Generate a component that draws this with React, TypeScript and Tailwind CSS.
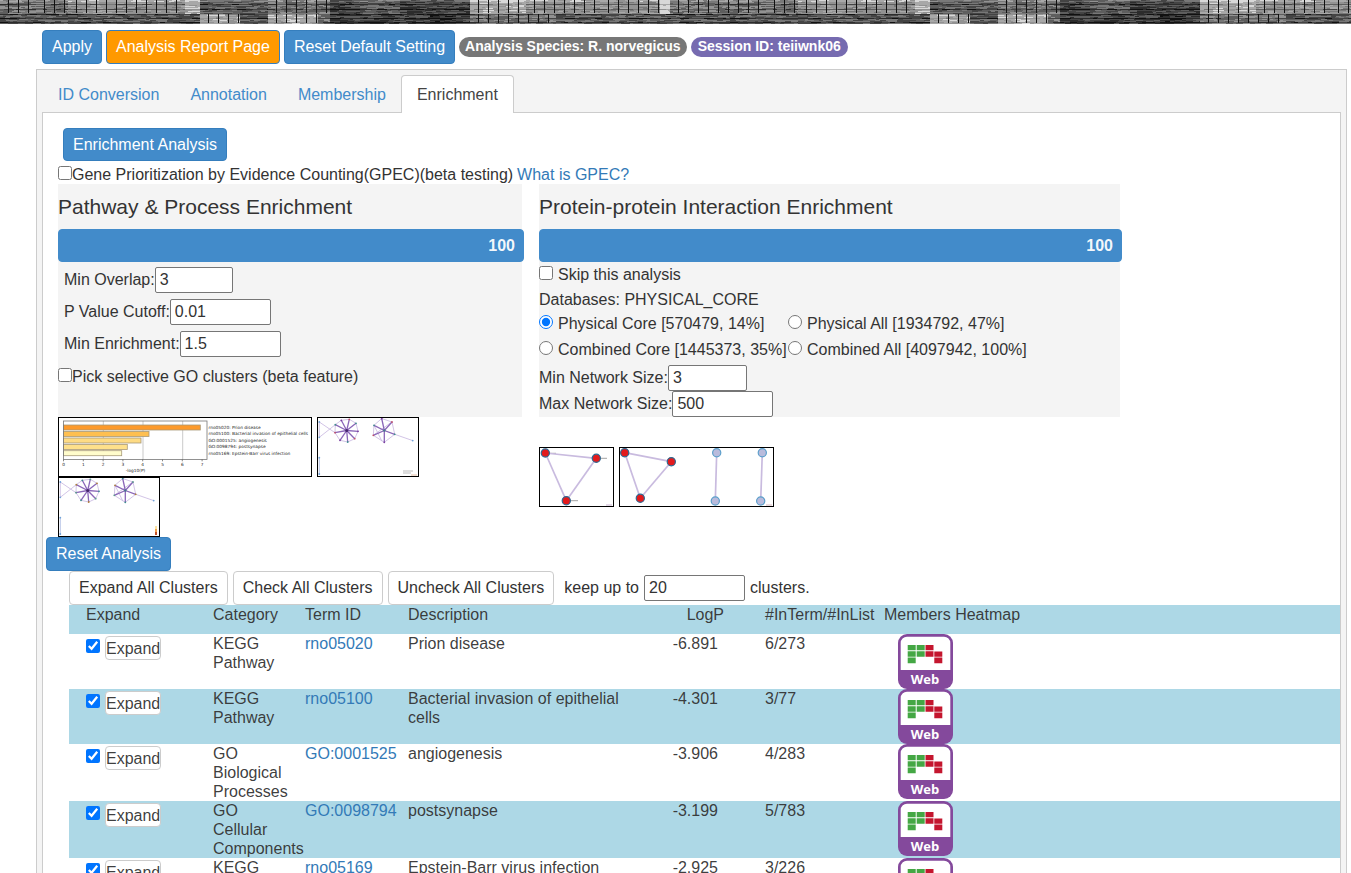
import type { ReactNode } from "react";

/* ---------- Woven texture of the page header ---------- */

const TILE = 730;
const SHADES = ["#101010", "#2c2c2c", "#444444", "#5e5e5e", "#787878", "#929292", "#a8a8a8", "#d8d8d8"];

// [start, end, brightness 0-7, has a grid]
const UPPER: [number, number, number, boolean][] = [
  [0, 36, 4, true], [36, 68, 4, true], [68, 185, 5, true], [185, 200, 6, false], [200, 268, 3, false],
  [268, 330, 4, true], [330, 360, 2, false], [360, 400, 3, false], [400, 470, 2, false], [470, 526, 6, true],
  [526, 600, 5, true], [600, 660, 5, true], [660, 670, 7, false], [670, 730, 4, true],
];
const LOWER: [number, number, number, boolean][] = [
  [0, 68, 3, false], [68, 200, 3, false], [200, 240, 6, true], [240, 268, 3, false], [268, 318, 6, true],
  [318, 330, 4, false], [330, 430, 2, false], [430, 456, 1, false], [456, 470, 2, false], [470, 556, 4, true],
  [556, 650, 3, false], [650, 730, 3, false],
];

function buildTexture() {
  let seed = 7;
  const random = () => {
    seed = (seed * 16807) % 2147483647;
    return seed / 2147483647;
  };
  const paths = SHADES.map(() => "");
  for (let y = 0; y < 24; y++) {
    const bands = y < 14 ? UPPER : LOWER;
    const darkRow = y === 4 || y === 9 || y === 14 || y === 18 || y === 22;
    for (const [start, end, level] of bands) {
      let x = start;
      while (x < end) {
        const w = Math.min(end - x, 3 + Math.floor(random() * 8));
        const noise = Math.round((random() - 0.5) * (level < 5 ? 3 : 1.6));
        const drop = darkRow ? (level < 6 ? 2 : 1) : 0;
        const lift = y < 2 ? 1 : 0;
        const shade = Math.max(0, Math.min(7, level + noise + lift - drop));
        paths[shade] += `M${x} ${y}h${w}v1h-${w}z`;
        x += w;
      }
    }
  }
  for (const [bands, y, h] of [[UPPER, 0, 13], [LOWER, 14, 9]] as const) {
    for (const [start, end, , grid] of bands) {
      if (!grid) continue;
      for (let x = start + 8; x < end; x += 10) paths[0] += `M${x} ${y}h1v${h}h-1z`;
    }
  }
  return paths;
}

const TEXTURE = buildTexture();

function HeaderTexture() {
  return (
    <svg className="block h-6 w-full" aria-hidden="true">
      <defs>
        <pattern id="weave" width={TILE} height="24" patternUnits="userSpaceOnUse">
          {TEXTURE.map((_, i) => {
            const layer = TEXTURE.length - 1 - i;
            return <path key={layer} d={TEXTURE[layer]} fill={SHADES[layer]} />;
          })}
        </pattern>
      </defs>
      <rect width="100%" height="24" fill="url(#weave)" />
    </svg>
  );
}

/* ---------- Controls ---------- */

function PrimaryButton({ children, className = "bg-[#428bca]" }: { children: ReactNode; className?: string }) {
  return (
    <button type="button" className={`h-[34px] rounded border border-[#357ebd] px-[9px] leading-5 text-white ${className}`}>
      {children}
    </button>
  );
}

function PlainButton({ children }: { children: ReactNode }) {
  return (
    <button type="button" className="h-[34px] rounded border border-[#ccc] bg-white px-[9px] leading-5">
      {children}
    </button>
  );
}

function NumberField({ id, label, value, width = "w-[101px]" }: { id: string; label: string; value: string; width?: string }) {
  return (
    <>
      <label htmlFor={id}>{label}</label>
      <input
        id={id}
        type="text"
        defaultValue={value}
        className={`h-[26px] rounded-[2px] border border-[#767676] bg-white px-1 ${width}`}
      />
    </>
  );
}

function ProgressBar({ label }: { label: string }) {
  return (
    <div
      role="progressbar"
      aria-label={label}
      aria-valuenow={100}
      className="-mr-0.5 flex h-[33px] items-center justify-end rounded border border-[#428bca] bg-[#428bca] px-2 font-bold text-white/95"
    >
      100
    </div>
  );
}

/* ---------- Thumbnails ---------- */

const BARS = [
  { end: 142.3, y: 8, fill: "#fd9a2b", label: "rno05020: Prion disease" },
  { end: 91, y: 14.5, fill: "#febf50", label: "rno05100: Bacterial invasion of epithelial cells" },
  { end: 83, y: 21, fill: "#fedb84", label: "GO:0001525: angiogenesis" },
  { end: 69.3, y: 27.5, fill: "#fee08b", label: "GO:0098794: postsynapse" },
  { end: 63.7, y: 33.7, fill: "#fffccb", label: "rno05169: Epstein-Barr virus infection" },
];

function Thumb({ w, title, children }: { w: number; title: string; children: ReactNode }) {
  return (
    <a href="#preview" aria-label={title} className="block">
      <svg width={w} height="60" viewBox={`0 0 ${w} 60`} className="block">
        <rect x="0.5" y="0.5" width={w - 1} height="59" fill="#fff" />
        {children}
        <rect x="0.5" y="0.5" width={w - 1} height="59" fill="none" stroke="#000" />
      </svg>
    </a>
  );
}

function BarChartThumb() {
  return (
    <Thumb w={254} title="Enriched terms bar chart">
      <g stroke="#bbb" strokeWidth="0.8">
        <path d="M45.3 4v38.5M85 4v38.5M124.7 4v38.5" />
      </g>
      {BARS.map((b) => (
        <g key={b.label}>
          <rect x="5.5" y={b.y} width={b.end - 5.5} height="5" fill={b.fill} stroke="#a99a78" strokeWidth="0.8" />
          <text x="150.5" y={b.y + 3.9} fontSize="4.3" fontFamily="DejaVu Sans, sans-serif" fill="#222">
            {b.label}
          </text>
        </g>
      ))}
      <rect x="5.5" y="4" width="143.5" height="38.5" fill="none" stroke="#777" strokeWidth="0.8" />
      {[0, 1, 2, 3, 4, 5, 6, 7].map((n) => (
        <g key={n}>
          <path d={`M${5.5 + n * 19.8} 42.5v1.8`} stroke="#555" strokeWidth="0.7" />
          <text x={5.5 + n * 19.8} y="49" fontSize="4.3" textAnchor="middle" fontFamily="DejaVu Sans, sans-serif" fill="#222">
            {n}
          </text>
        </g>
      ))}
      <text x="77.5" y="55" fontSize="4.3" textAnchor="middle" fontFamily="DejaVu Sans, sans-serif" fill="#222">
        -log10(P)
      </text>
    </Thumb>
  );
}

const STAR_A: [number, number][] = [[24.3, 3.3], [32.3, 2.3], [39, 6.3], [41, 14.3], [37.7, 21.7], [30.7, 25], [23, 23.3], [18, 15.7], [18.3, 7.7]];
const STAR_B: [number, number][] = [[64.7, 1.5], [75, 5], [77.7, 17.3], [67.3, 25.3], [56.3, 18.3], [57, 8.3]];

function ClusterNetwork({ dots }: { dots: string[] }) {
  const ring = (pts: [number, number][]) => pts.map((p) => p.join(",")).join(" ");
  return (
    <g>
      <g fill="none" stroke="#cdbde3" strokeWidth="0.9">
        <polygon points={ring(STAR_A)} />
        <polygon points={ring(STAR_B)} />
        <path d="M2.3 5L18 15.7M2.3 20.3L18.3 7.7M2.3 5v15.3M77.7 17.3l18 6.3M57 8.3l8 16M56.3 18.3l18-13" />
      </g>
      <path d="M2.3 40.7V58" stroke="#b9c6e8" strokeWidth="1" />
      <g stroke="#8a66b8" strokeWidth="1.3">
        {STAR_A.map(([x, y]) => (
          <line key={`${x}-${y}`} x1="29.7" y1="13.5" x2={x} y2={y} />
        ))}
        {STAR_B.map(([x, y]) => (
          <line key={`${x}-${y}`} x1="67.3" y1="13.5" x2={x} y2={y} />
        ))}
      </g>
      {[...STAR_A, ...STAR_B].map(([x, y], i) => (
        <circle key={i} cx={x} cy={y} r="0.9" fill={dots[i % dots.length]} />
      ))}
      <circle cx="29.7" cy="13.5" r="1.5" fill="#46276c" />
      <circle cx="67.3" cy="13.5" r="1.2" fill="#46788c" />
      {[[95.7, 23.6], [2.3, 5], [2.3, 20.3], [2.3, 40.7], [2.3, 57]].map(([x, y]) => (
        <circle key={`${x}-${y}`} cx={x} cy={y} r="0.9" fill="#6fa3d8" />
      ))}
    </g>
  );
}

function ProteinNetwork({ nodes, edges }: { nodes: [number, number, boolean][]; edges: [number, number][] }) {
  return (
    <g>
      {edges.map(([a, b]) => (
        <line key={`${a}-${b}`} x1={nodes[a][0]} y1={nodes[a][1]} x2={nodes[b][0]} y2={nodes[b][1]} stroke="#c9bbdf" strokeWidth="1.7" />
      ))}
      {nodes.map(([x, y, hit]) => (
        <circle key={`${x}-${y}`} cx={x} cy={y} r="4.1" fill={hit ? "#e31a1c" : "#b9bbdc"} stroke={hit ? "#2c6a93" : "#5b9fcb"} strokeWidth="1.2" />
      ))}
    </g>
  );
}

function HeatmapIcon() {
  return (
    <svg width="55" height="55" viewBox="0 0 55 55" className="block" role="img" aria-label="Web heatmap">
      <rect width="55" height="55" rx="9" fill="#84499c" />
      <path d="M2.7 36V9a6.3 6.3 0 0 1 6.3-6.3h37a6.3 6.3 0 0 1 6.3 6.3v27z" fill="#fff" />
      <path d="M9.7 11h8v5.3h-8zM18.7 11h8v5.3h-8zM9.7 17.2h8v5.5h-8zM18.7 17.2h8v5.5h-8zM9.7 23.6h8v5.6h-8z" fill="#44a744" />
      <path d="M27.5 11h8v5.3h-8zM27.5 17.2h8v5.5h-8zM36.3 17.4h8v5.3h-8zM36.3 23.6h8v5.6h-8z" fill="#c4162e" />
      <text x="27" y="49.5" fontSize="13" className="font-['Open_Sans','Noto_Sans',sans-serif] font-bold" textAnchor="middle" fill="#fff">
        Web
      </text>
    </svg>
  );
}

/* ---------- Data ---------- */

const TABS = ["ID Conversion", "Annotation", "Membership", "Enrichment"];

const DATABASES = [
  { id: "physical-core", label: "Physical Core [570479, 14%]" },
  { id: "physical-all", label: "Physical All [1934792, 47%]" },
  { id: "combined-core", label: "Combined Core [1445373, 35%]" },
  { id: "combined-all", label: "Combined All [4097942, 100%]" },
];

const ROWS = [
  { category: "KEGG Pathway", term: "rno05020", description: "Prion disease", logP: "-6.891", ratio: "6/273" },
  { category: "KEGG Pathway", term: "rno05100", description: "Bacterial invasion of epithelial cells", logP: "-4.301", ratio: "3/77" },
  { category: "GO Biological Processes", term: "GO:0001525", description: "angiogenesis", logP: "-3.906", ratio: "4/283" },
  { category: "GO Cellular Components", term: "GO:0098794", description: "postsynapse", logP: "-3.199", ratio: "5/783" },
  { category: "KEGG Pathway", term: "rno05169", description: "Epstein-Barr virus infection", logP: "-2.925", ratio: "3/226" },
];

/* ---------- Sections ---------- */

function PathwaySection() {
  return (
    <section className="w-[464px]">
      <div className="h-[233px] bg-[#f4f4f4]">
        <h2 className="flex h-[45px] items-center text-[21px]">Pathway &amp; Process Enrichment</h2>
        <ProgressBar label="Pathway and process enrichment" />
        <div className="pt-0.5">
          <div className="flex h-8 items-center pl-[6px]">
            <NumberField id="min-overlap" label="Min Overlap:" value="3" width="w-[78px]" />
          </div>
          <div className="flex h-8 items-center pl-[6px]">
            <NumberField id="p-cutoff" label="P Value Cutoff:" value="0.01" />
          </div>
          <div className="flex h-8 items-center pl-[6px]">
            <NumberField id="min-enrichment" label="Min Enrichment:" value="1.5" />
          </div>
          <label className="flex h-[34px] items-center">
            <input type="checkbox" className="mb-1 size-3.5" />
            Pick selective GO clusters (beta feature)
          </label>
        </div>
      </div>
      <div className="flex flex-wrap gap-x-[5px]">
        <BarChartThumb />
        <Thumb w={102} title="Network coloured by cluster">
          <ClusterNetwork dots={["#7a3fa0", "#c0506a", "#3f8f8f"]} />
          <path d="M86 54h10M86 56h8" stroke="#bbb" strokeWidth="1.2" />
          <path d="M94 58h6" stroke="#e0b090" strokeWidth="0.8" />
        </Thumb>
        <Thumb w={102} title="Network coloured by p-value">
          <ClusterNetwork dots={["#3f8f8f", "#5a9c8c", "#b0803a"]} />
          <path d="M97 49h2v3h-2z" fill="#fbe3a0" />
          <path d="M97 52h2v3h-2z" fill="#f3a24a" />
          <path d="M97 55h2v3h-2z" fill="#c4502a" />
        </Thumb>
      </div>
    </section>
  );
}

function InteractionSection() {
  return (
    <section className="w-[581px]">
      <div className="h-[233px] bg-[#f4f4f4]">
        <h2 className="flex h-[45px] items-center text-[21px]">Protein-protein Interaction Enrichment</h2>
        <ProgressBar label="Protein-protein interaction enrichment" />
        <label className="flex h-[26px] items-center gap-[5px]">
          <input type="checkbox" className="mb-1 size-3.5" />
          Skip this analysis
        </label>
        <p className="leading-6">Databases: PHYSICAL_CORE</p>
        <div className="grid grid-cols-[249px_max-content] grid-rows-[23px_30px]">
          {DATABASES.map((db, i) => (
            <label key={db.id} className="flex items-center gap-[5px] whitespace-nowrap">
              <input type="radio" name="database" value={db.id} defaultChecked={i === 0} className="mb-1 size-3.5 shrink-0" />
              {db.label}
            </label>
          ))}
        </div>
        <div className="flex items-center">
          <NumberField id="min-network" label="Min Network Size:" value="3" width="w-[79px]" />
        </div>
        <div className="flex items-center">
          <NumberField id="max-network" label="Max Network Size:" value="500" />
        </div>
      </div>
      <div className="mt-[30px] flex gap-[5px]">
        <Thumb w={75} title="Protein complex network">
          <path d="M11 6.3h6M62 11.3h6M32 53.7h7" stroke="#999" strokeWidth="0.9" />
          <ProteinNetwork nodes={[[6.3, 6, true], [57.3, 11.3, true], [27.3, 53.7, true]]} edges={[[0, 1], [1, 2], [0, 2]]} />
          <path d="M67 58h6" stroke="#c9b3d0" strokeWidth="1" />
        </Thumb>
        <Thumb w={155} title="Full protein network">
          <ProteinNetwork
            nodes={[[5.7, 5.7, true], [52.3, 14.7, true], [21.3, 51.3, true], [97.7, 5.7, false], [96.3, 54, false], [143.3, 5.7, false], [141.7, 54, false]]}
            edges={[[0, 1], [1, 2], [0, 2], [3, 4], [5, 6]]}
          />
          <path d="M147 58h6" stroke="#d8b8c0" strokeWidth="1" />
        </Thumb>
      </div>
    </section>
  );
}

function ClusterTable() {
  return (
    <table className="w-full table-fixed border-collapse text-left leading-[19px] text-[#333]/95">
      <colgroup>
        <col className="w-36" />
        <col className="w-[92px]" />
        <col className="w-[103px]" />
        <col className="w-[232px]" />
        <col className="w-[125px]" />
        <col className="w-[119px]" />
        <col />
      </colgroup>
      <thead>
        <tr className="h-[29px] bg-[#add8e6] align-top [&>th]:p-0 [&>th]:font-normal">
          <th><span className="pl-[17px]">Expand</span></th>
          <th>Category</th>
          <th>Term ID</th>
          <th>Description</th>
          <th><span className="block pr-[41px] text-right">LogP</span></th>
          <th>#InTerm/#InList</th>
          <th>Members Heatmap</th>
        </tr>
      </thead>
      <tbody>
        {ROWS.map((row) => (
          <tr key={row.term} className="align-top even:bg-[#add8e6] [&>td]:p-0">
            <td>
              <div className="flex gap-[5px] pl-[17px] pt-0.5">
                <input type="checkbox" defaultChecked aria-label={`Select ${row.term}`} className="mt-[3px] size-3.5" />
                <button type="button" className="h-6 rounded border border-[#ccc] bg-white pt-px leading-5">Expand</button>
              </div>
            </td>
            <td><span className="block w-20">{row.category}</span></td>
            <td><a href={`#${row.term}`} className="text-[#337ab7]">{row.term}</a></td>
            <td>{row.description}</td>
            <td><span className="block pr-[47px] text-right">{row.logP}</span></td>
            <td>{row.ratio}</td>
            <td>
              <a href={`#heatmap-${row.term}`} className="ml-[14px] block w-[55px]">
                <HeatmapIcon />
              </a>
            </td>
          </tr>
        ))}
      </tbody>
    </table>
  );
}

export default function App() {
  return (
    <div className="h-screen overflow-hidden bg-white font-['Liberation_Sans',Arial,sans-serif] text-base leading-5 text-[#333]">
      <HeaderTexture />
      <div className="flex gap-1 pl-[42px] pt-[6px]">
        <PrimaryButton>Apply</PrimaryButton>
        <PrimaryButton className="bg-[#ff9900]">Analysis Report Page</PrimaryButton>
        <PrimaryButton>Reset Default Setting</PrimaryButton>
        <div className="flex gap-1 self-center text-sm font-bold text-white">
          <span className="h-5 rounded-full bg-[#777] px-[6px] leading-[19px]">Analysis Species: R. norvegicus</span>
          <span className="h-5 rounded-full bg-[#766bb0] px-[7px] leading-[19px]">Session ID: teiiwnk06</span>
        </div>
      </div>

      <div className="ml-9 mr-1 mt-[5px] border border-[#ccc] bg-[#f4f4f4] px-[5px] pt-[5px]">
        <nav className="relative flex">
          {TABS.map((tab) =>
            tab === "Enrichment" ? (
              <a key={tab} href="#enrichment" aria-current="page" className="h-[38px] rounded-t border border-b-0 border-[#ccc] bg-white px-[15px] pt-[9px] text-[#444]">
                {tab}
              </a>
            ) : (
              <a key={tab} href={`#${tab}`} className="-mr-px h-[38px] border border-transparent px-[15px] pt-[9px] text-[#428bca]">
                {tab}
              </a>
            ),
          )}
        </nav>

        <main className="-mt-px border border-[#ccc] bg-white pt-[15px]">
          <div className="pl-[15px]">
            <div className="flex pl-[5px]">
              <button type="button" className="h-[33px] rounded border border-[#357ebd] bg-[#428bca] px-[9px] text-white">
                Enrichment Analysis
              </button>
            </div>
            <div className="flex h-[23px] items-center gap-1 pt-1">
              <label className="flex items-center">
                <input type="checkbox" className="mb-1 size-3.5" />
                Gene Prioritization by Evidence Counting(GPEC)(beta testing)
              </label>
              <a href="#gpec" className="text-[#337ab7]">What is GPEC?</a>
            </div>
            <div className="flex gap-[17px]">
              <PathwaySection />
              <InteractionSection />
            </div>
          </div>

          <div className="flex pl-[3px]">
            <PrimaryButton>Reset Analysis</PrimaryButton>
          </div>
          <div className="pl-[26px]">
            <div className="flex items-center gap-[5px]">
              <PlainButton>Expand All Clusters</PlainButton>
              <PlainButton>Check All Clusters</PlainButton>
              <PlainButton>Uncheck All Clusters</PlainButton>
              <label htmlFor="keep" className="pl-[5px]">keep up to</label>
              <input id="keep" type="text" defaultValue="20" className="h-[26px] w-[101px] rounded-[2px] border border-[#767676] px-1" />
              <span>clusters.</span>
            </div>
            <ClusterTable />
          </div>
        </main>
      </div>
    </div>
  );
}
